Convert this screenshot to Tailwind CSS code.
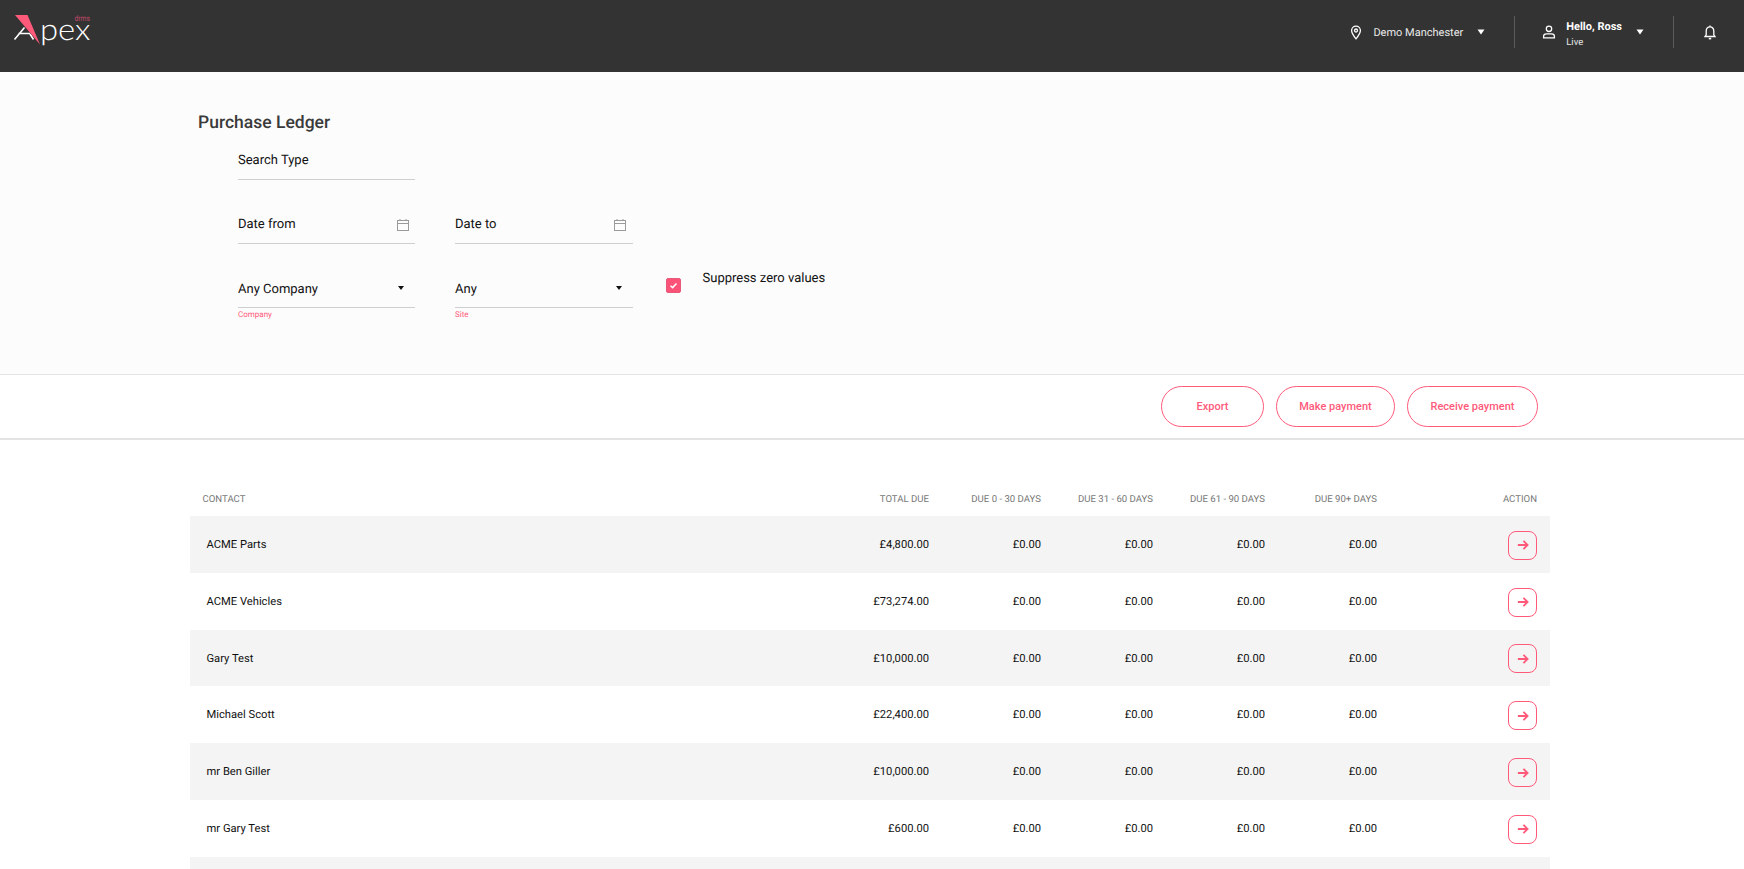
<!DOCTYPE html>
<html lang="en">
<head>
<meta charset="utf-8">
<title>Purchase Ledger</title>
<script src="https://cdn.jsdelivr.net/npm/@tailwindcss/browser@4"></script>
</head>
<body class="h-screen overflow-hidden bg-white font-['Roboto',sans-serif] text-[#111] antialiased [text-rendering:geometricPrecision]">
<header class="h-[72px] bg-[#333333] flex items-start justify-between text-white relative">
  <svg class="ml-[12px] mt-[12px]" width="90" height="36" viewBox="12 12 90 36">
    <path d="M14.5 39.5L24.5 27.5M18.5 33.5H30M30 34L33.5 39.5" stroke="#fff" stroke-width="1.6" fill="none"/>
    <text x="40" y="39.5" font-family="Lato, sans-serif" font-weight="300" font-size="30" fill="#fff" textLength="50.5" lengthAdjust="spacingAndGlyphs">pex</text>
    <path d="M15 15H27.5L40 44.5Z" fill="#ff5a7a"/>
    <text x="74.5" y="21" font-family="Roboto, sans-serif" font-size="8" fill="#c2486a" textLength="15.5" lengthAdjust="spacingAndGlyphs">drms</text>
  </svg>
  <div class="flex items-center h-[32px] mt-[16px] pr-[26px]">
    <svg class="mr-[9px]" width="16" height="16" viewBox="0 0 16 16" fill="none" stroke="#fff" stroke-width="1.3"><path d="M8 14.8C5.6 12 3.6 9.6 3.6 6.6a4.4 4.4 0 0 1 8.8 0C12.4 9.6 10.4 12 8 14.8Z"/><circle cx="8" cy="6.5" r="1.5"/></svg>
    <span class="text-[11px] text-[#e8e8e8] pt-[2px]">Demo Manchester</span>
    <svg class="ml-[14px] mr-[29px]" width="8" height="6" viewBox="0 0 8 6"><path d="M0.5 0.5H7.5L4 5.5Z" fill="#fff"/></svg>
    <div class="w-px h-[32px] bg-[#5c5c5c]"></div>
    <svg class="ml-[26px] mr-[9px]" width="16" height="16" viewBox="0 0 16 16" fill="none" stroke="#fff" stroke-width="1.3"><circle cx="8" cy="4.8" r="2.7"/><path d="M2.6 13.8V12.2C2.6 10.6 4 9.8 5.4 9.8H10.6C12 9.8 13.4 10.6 13.4 12.2V13.8Z"/></svg>
    <div class="flex flex-col pt-[6px]">
      <span class="text-[11px] leading-[15px] font-bold">Hello, Ross</span>
      <span class="text-[9.5px] leading-[17px] text-[#e8e8e8]">Live</span>
    </div>
    <svg class="ml-[14px] mr-[29px]" width="8" height="6" viewBox="0 0 8 6"><path d="M0.5 0.5H7.5L4 5.5Z" fill="#fff"/></svg>
    <div class="w-px h-[32px] bg-[#5c5c5c]"></div>
    <svg class="ml-[28px]" width="16" height="16" viewBox="0 0 16 16" fill="none" stroke="#fff" stroke-width="1.3"><path d="M3 12.5H13L11.8 10.8V7C11.8 4.6 10.2 2.8 8 2.8S4.2 4.6 4.2 7V10.8Z"/><path d="M8 1.4V2.8"/><path d="M6.8 14.6H9.2" stroke-width="1.6"/></svg>
  </div>
</header>

<section class="h-[303px] bg-[#fcfcfc] border-b border-[#e3e3e3] pl-[198px] pt-[40px]">
  <h1 class="text-[17.5px] leading-[22px] font-medium text-[#3a3a3a]">Purchase Ledger</h1>
  <div class="ml-[40px] mt-[8px] flex flex-col">
    <div class="w-[177px] h-[38px] border-b border-[#cfcfcf] text-[13px] leading-[20px] pt-[9px]">Search Type</div>
    <div class="flex gap-[40px] mt-[26px]">
      <div class="w-[177px] h-[38px] border-b border-[#cfcfcf] text-[13px] leading-[20px] pt-[9px] flex justify-between">
        <span>Date from</span>
        <svg class="mr-[5px] mt-[3px]" width="14" height="14" viewBox="0 0 14 14" fill="none" stroke="#9a9a9a"><rect x="1.5" y="2.5" width="11" height="10"/><path d="M1.5 5.5H12.5M4 1V3M10 1V3"/></svg>
      </div>
      <div class="w-[178px] h-[38px] border-b border-[#cfcfcf] text-[13px] leading-[20px] pt-[9px] flex justify-between">
        <span>Date to</span>
        <svg class="mr-[6px] mt-[3px]" width="14" height="14" viewBox="0 0 14 14" fill="none" stroke="#9a9a9a"><rect x="1.5" y="2.5" width="11" height="10"/><path d="M1.5 5.5H12.5M4 1V3M10 1V3"/></svg>
      </div>
    </div>
    <div class="flex mt-[26px]">
      <div class="w-[177px]">
        <div class="h-[38px] border-b border-[#cfcfcf] text-[13px] leading-[20px] pt-[10px] flex justify-between">
          <span>Any Company</span>
          <svg class="mr-[11px] mt-[6px]" width="6" height="4" viewBox="0 0 6 4"><path d="M0 0H6L3 4Z" fill="#111"/></svg>
        </div>
        <div class="text-[8px] leading-[12px] mt-[1px] text-[#ff5a7a]">Company</div>
      </div>
      <div class="w-[178px] ml-[40px]">
        <div class="h-[38px] border-b border-[#cfcfcf] text-[13px] leading-[20px] pt-[10px] flex justify-between">
          <span>Any</span>
          <svg class="mr-[11px] mt-[6px]" width="6" height="4" viewBox="0 0 6 4"><path d="M0 0H6L3 4Z" fill="#111"/></svg>
        </div>
        <div class="text-[8px] leading-[12px] mt-[1px] text-[#ff5a7a]">Site</div>
      </div>
      <div class="w-[15px] h-[15px] ml-[33px] mt-[8px] rounded-[2px] bg-[#fb5378] border border-[#e85a7c] flex items-center justify-center">
        <svg width="9" height="9" viewBox="0 0 9 9" fill="none" stroke="#fff" stroke-width="1.5"><path d="M1.5 4.8L3.6 6.6L7.5 2.4"/></svg>
      </div>
      <span class="ml-[21.5px] text-[13px] leading-[20px] -mt-[1.5px]">Suppress zero values</span>
    </div>
  </div>
</section>

<section class="h-[65px] bg-white border-b-2 border-[#e3e3e3] flex justify-end gap-[12px] pt-[11px] pr-[206px]">
  <button class="w-[103px] h-[41px] pt-[2px] rounded-full border border-[#ff5a7a] text-[11px] font-medium text-[#ff5a7a]">Export</button>
  <button class="w-[119px] h-[41px] pt-[2px] rounded-full border border-[#ff5a7a] text-[11px] font-medium text-[#ff5a7a]">Make payment</button>
  <button class="w-[131px] h-[41px] pt-[2px] rounded-full border border-[#ff5a7a] text-[11px] font-medium text-[#ff5a7a]">Receive payment</button>
</section>

<main class="ml-[190px] w-[1360px] mt-[50px] text-[11.2px]">
  <div class="grid grid-cols-[627px_112px_112px_112px_112px_112px_173px] h-[26px] items-start text-[9.6px] text-[#777] text-right leading-[20px]">
    <span class="text-left pl-[12.5px]">CONTACT</span><span>TOTAL DUE</span><span>DUE 0 - 30 DAYS</span><span>DUE 31 - 60 DAYS</span><span>DUE 61 - 90 DAYS</span><span>DUE 90+ DAYS</span><span class="pr-[13px]">ACTION</span>
  </div>
  <div class="grid grid-cols-[627px_112px_112px_112px_112px_112px_173px] h-[56.8px] pt-[2px] items-center text-right bg-[#f4f4f4]">
    <span class="text-left pl-[16.5px]">ACME Parts</span><span>£4,800.00</span><span>£0.00</span><span>£0.00</span><span>£0.00</span><span>£0.00</span>
    <span class="flex justify-end pr-[13px]"><a class="w-[29px] h-[29px] rounded-[8px] border border-[#ff5a7a] flex items-center justify-center"><svg width="12" height="12" viewBox="0 0 14 14" fill="none" stroke="#ff5a7a" stroke-width="2.2"><path d="M1 7H12M7.5 2.2L12.3 7L7.5 11.8"/></svg></a></span>
  </div>
  <div class="grid grid-cols-[627px_112px_112px_112px_112px_112px_173px] h-[56.8px] pt-[2px] items-center text-right bg-white">
    <span class="text-left pl-[16.5px]">ACME Vehicles</span><span>£73,274.00</span><span>£0.00</span><span>£0.00</span><span>£0.00</span><span>£0.00</span>
    <span class="flex justify-end pr-[13px]"><a class="w-[29px] h-[29px] rounded-[8px] border border-[#ff5a7a] flex items-center justify-center"><svg width="12" height="12" viewBox="0 0 14 14" fill="none" stroke="#ff5a7a" stroke-width="2.2"><path d="M1 7H12M7.5 2.2L12.3 7L7.5 11.8"/></svg></a></span>
  </div>
  <div class="grid grid-cols-[627px_112px_112px_112px_112px_112px_173px] h-[56.8px] pt-[2px] items-center text-right bg-[#f4f4f4]">
    <span class="text-left pl-[16.5px]">Gary Test</span><span>£10,000.00</span><span>£0.00</span><span>£0.00</span><span>£0.00</span><span>£0.00</span>
    <span class="flex justify-end pr-[13px]"><a class="w-[29px] h-[29px] rounded-[8px] border border-[#ff5a7a] flex items-center justify-center"><svg width="12" height="12" viewBox="0 0 14 14" fill="none" stroke="#ff5a7a" stroke-width="2.2"><path d="M1 7H12M7.5 2.2L12.3 7L7.5 11.8"/></svg></a></span>
  </div>
  <div class="grid grid-cols-[627px_112px_112px_112px_112px_112px_173px] h-[56.8px] pt-[2px] items-center text-right bg-white">
    <span class="text-left pl-[16.5px]">Michael Scott</span><span>£22,400.00</span><span>£0.00</span><span>£0.00</span><span>£0.00</span><span>£0.00</span>
    <span class="flex justify-end pr-[13px]"><a class="w-[29px] h-[29px] rounded-[8px] border border-[#ff5a7a] flex items-center justify-center"><svg width="12" height="12" viewBox="0 0 14 14" fill="none" stroke="#ff5a7a" stroke-width="2.2"><path d="M1 7H12M7.5 2.2L12.3 7L7.5 11.8"/></svg></a></span>
  </div>
  <div class="grid grid-cols-[627px_112px_112px_112px_112px_112px_173px] h-[56.8px] pt-[2px] items-center text-right bg-[#f4f4f4]">
    <span class="text-left pl-[16.5px]">mr Ben Giller</span><span>£10,000.00</span><span>£0.00</span><span>£0.00</span><span>£0.00</span><span>£0.00</span>
    <span class="flex justify-end pr-[13px]"><a class="w-[29px] h-[29px] rounded-[8px] border border-[#ff5a7a] flex items-center justify-center"><svg width="12" height="12" viewBox="0 0 14 14" fill="none" stroke="#ff5a7a" stroke-width="2.2"><path d="M1 7H12M7.5 2.2L12.3 7L7.5 11.8"/></svg></a></span>
  </div>
  <div class="grid grid-cols-[627px_112px_112px_112px_112px_112px_173px] h-[56.8px] pt-[2px] items-center text-right bg-white">
    <span class="text-left pl-[16.5px]">mr Gary Test</span><span>£600.00</span><span>£0.00</span><span>£0.00</span><span>£0.00</span><span>£0.00</span>
    <span class="flex justify-end pr-[13px]"><a class="w-[29px] h-[29px] rounded-[8px] border border-[#ff5a7a] flex items-center justify-center"><svg width="12" height="12" viewBox="0 0 14 14" fill="none" stroke="#ff5a7a" stroke-width="2.2"><path d="M1 7H12M7.5 2.2L12.3 7L7.5 11.8"/></svg></a></span>
  </div>
  <div class="h-[12px] bg-[#f4f4f4]"></div>
</main>
</body>
</html>
